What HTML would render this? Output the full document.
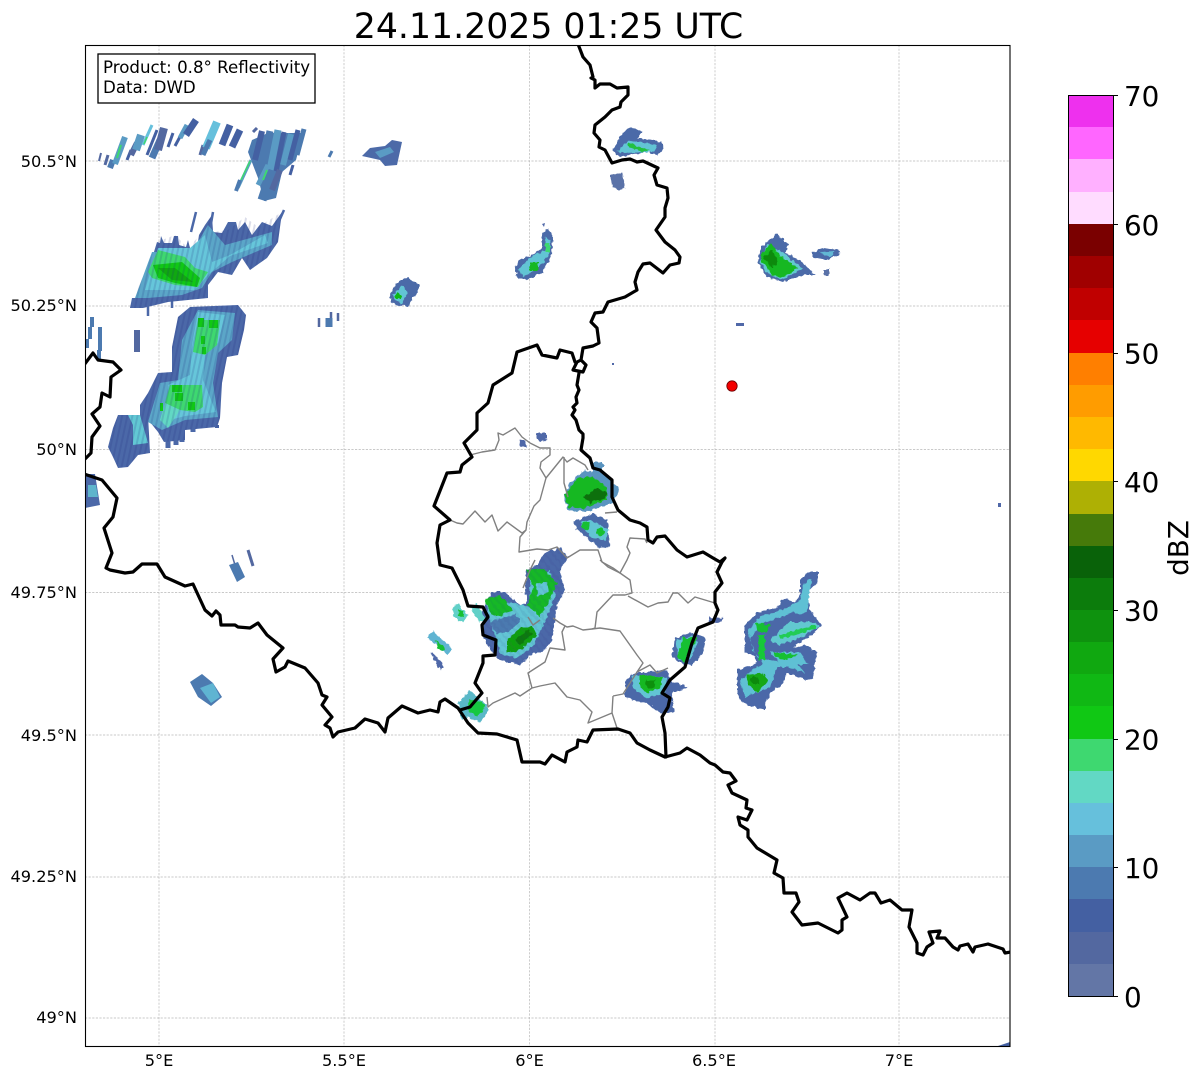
<!DOCTYPE html>
<html><head><meta charset="utf-8"><title>Radar</title>
<style>html,body{margin:0;padding:0;background:#fff}svg{display:block}text{font-family:"DejaVu Sans","Liberation Sans",sans-serif;fill:#000}</style></head>
<body>
<svg xmlns="http://www.w3.org/2000/svg" width="1202" height="1081" viewBox="0 0 1202 1081">
<defs>
<clipPath id="ax"><rect x="85" y="45" width="925" height="1001"/></clipPath>
<pattern id="st" width="5" height="40" patternUnits="userSpaceOnUse" patternTransform="rotate(12)"><rect width="2" height="40" fill="#202c80" fill-opacity=".16"/></pattern>
<pattern id="st2" width="6" height="40" patternUnits="userSpaceOnUse" patternTransform="rotate(-40)"><rect width="2.5" height="40" fill="#202c80" fill-opacity=".08"/></pattern>
<filter id="r" x="-10%" y="-10%" width="120%" height="120%"><feTurbulence type="fractalNoise" baseFrequency=".28" numOctaves="1" seed="4"/><feDisplacementMap in="SourceGraphic" scale="5" xChannelSelector="R" yChannelSelector="G"/></filter>
</defs>
<rect width="1202" height="1081" fill="#fff"/>
<text x="548.5" y="38" font-size="34.7" text-anchor="middle">24.11.2025 01:25 UTC</text>
<g clip-path="url(#ax)">
<!-- grid -->
<g stroke="#b8b8b8" stroke-width=".7" stroke-dasharray="2.2 1.4" fill="none">
<path d="M159 45V1046M344 45V1046M529.5 45V1046M715 45V1046M899 45V1046"/>
<path d="M85 161H1010M85 306H1010M85 449.5H1010M85 592.5H1010M85 735H1010M85 877H1010M85 1018H1010"/>
</g>
<!-- NW strip bars -->
<polygon points="252,140 268,133 303,133 296,160 282,172 276,198 264,201 258,178 248,152" fill="#4c7ab0"/>
<g fill="none" stroke-linecap="butt">
<path d="M99 161L101 153" stroke="#5368a0" stroke-width="2"/>
<path d="M105 165L108 155" stroke="#5368a0" stroke-width="3"/>
<path d="M110 168L113 160" stroke="#4c7ab0" stroke-width="6"/>
<path d="M115 164L125 137" stroke="#5a9bc4" stroke-width="6"/>
<path d="M117 158L121 145" stroke="#3ed870" stroke-width="2"/>
<path d="M127 160L131 150" stroke="#4460a2" stroke-width="3"/>
<path d="M131 155L137 143" stroke="#5368a0" stroke-width="6"/>
<path d="M136 150L141 135" stroke="#5a9bc4" stroke-width="8"/>
<path d="M143 145L152 125" stroke="#66c0dc" stroke-width="3"/>
<path d="M144 144L147 137" stroke="#3ed870" stroke-width="1.5"/>
<path d="M147 155L157 130" stroke="#4460a2" stroke-width="3"/>
<path d="M152 158L160 140" stroke="#4c7ab0" stroke-width="7"/>
<path d="M158 150L164 128" stroke="#5368a0" stroke-width="8"/>
<path d="M168 147L173 133" stroke="#4460a2" stroke-width="3"/>
<path d="M175 146L182 133" stroke="#4460a2" stroke-width="3"/>
<path d="M180 138L187 125" stroke="#5a9bc4" stroke-width="5"/>
<path d="M186 135L196 120" stroke="#4460a2" stroke-width="7"/>
<path d="M200 155L203 145" stroke="#5368a0" stroke-width="3"/>
<path d="M206 148L217 122" stroke="#66c0dc" stroke-width="8"/>
<path d="M203 155L210 140" stroke="#4c7ab0" stroke-width="5"/>
<path d="M222 145L230 125" stroke="#4460a2" stroke-width="7"/>
<path d="M232 147L240 130" stroke="#4460a2" stroke-width="7"/>
<path d="M238 188L251 160" stroke="#5a9bc4" stroke-width="3"/>
<path d="M241 180L250 161" stroke="#3ed870" stroke-width="1.5"/>
<path d="M236 191L240 180" stroke="#4c7ab0" stroke-width="4"/>
<path d="M253 132L257 128" stroke="#5368a0" stroke-width="3"/>
<path d="M255 160L262 131" stroke="#4460a2" stroke-width="6"/>
<path d="M262 168L270 131" stroke="#4c7ab0" stroke-width="7"/>
<path d="M270 170L278 130" stroke="#5a9bc4" stroke-width="7"/>
<path d="M276 172L284 132" stroke="#4460a2" stroke-width="5"/>
<path d="M283 165L291 134" stroke="#5a9bc4" stroke-width="6"/>
<path d="M290 160L298 130" stroke="#4460a2" stroke-width="5"/>
<path d="M297 155L304 129" stroke="#4c7ab0" stroke-width="5"/>
<path d="M290 175L293 165" stroke="#4460a2" stroke-width="3"/>
<path d="M262 200L272 170" stroke="#4c7ab0" stroke-width="9"/>
<path d="M258 185L268 165" stroke="#5a9bc4" stroke-width="5"/>
<path d="M272 190L280 170" stroke="#5368a0" stroke-width="6"/>
<path d="M263 180L267 170" stroke="#3ed870" stroke-width="2"/>
<path d="M329 157L332 151" stroke="#4c7ab0" stroke-width="3"/>
<path d="M319 318V327M338 313V321M331 312V320" stroke="#5368a0" stroke-width="2.5"/>
<path d="M329 318V327" stroke="#4c7ab0" stroke-width="7"/>
<path d="M90 327V339M100 327V351M87 339V348M92 317V327M99 350V360" stroke="#4c7ab0" stroke-width="4"/>
<path d="M137 330V352" stroke="#5368a0" stroke-width="6"/>
<path d="M217 425V428" stroke="#4460a2" stroke-width="4"/>
<path d="M232 555L235 565" stroke="#5368a0" stroke-width="1.5"/>
<path d="M248 550L253 566" stroke="#5368a0" stroke-width="3"/>
<path d="M172 308V300M148 316V305M191 232L196 212M276 228L284 210M209 235L213 212" stroke="#4b68a8" stroke-width="2.5"/>
<path d="M168 448V434M176 445V432M182 442V430M193 432V425" stroke="#4b68a8" stroke-width="5"/>
</g>
<polygon points="362,156 370,148 385,146 392,140 402,142 397,165 385,166 380,160" fill="#4c6aa8"/>
<polygon points="375,152 390,147 394,152 380,158" fill="#5a9bc4"/>
<!-- storm 2 -->
<polygon points="130,308 132,298 140,298 157,242 160,243 161,236 164,243 172,243 174,236 178,236 179,245 186,247 188,240 190,248 197,248 199,235 205,225 212,215 213,232 222,233 228,222 236,222 238,230 245,222 252,235 262,222 272,226 282,212 278,242 267,258 250,270 242,258 232,275 218,272 208,285 208,298 168,302 143,308" fill="#4b68a8"/>
<polygon points="135,298 152,252 192,252 208,225 225,245 272,232 272,245 232,262 212,272 202,288 182,295 148,298" fill="#5ba6c8"/>
<polygon points="145,290 158,248 190,248 205,235 212,262 230,255 265,235 268,243 230,256 208,275 195,290" fill="#66c6da"/>
<polygon points="148,272 158,250 185,257 195,268 208,272 198,287 175,285 152,278" fill="#3ed870"/>
<polygon points="153,265 182,262 200,278 197,287 175,283 158,278" fill="#10c814"/>
<polygon points="158,268 175,268 193,282 172,280" fill="#10a810"/>
<polygon points="130,308 157,242 175,235 188,248 200,235 212,215 213,232 228,230 245,217 258,227 282,212 278,242 267,258 250,270 242,258 232,275 218,272 208,285 208,298 168,302 143,308" fill="url(#st)"/>
<!-- storm 3 -->
<polygon points="190,307 238,305 246,315 244,330 238,355 227,357 222,383 220,418 217,427 185,430 185,440 164,442 158,432 150,422 140,422 140,405 148,393 158,373 172,372 172,347 178,317" fill="#4b68a8"/>
<polygon points="198,310 235,313 232,340 218,353 213,383 218,417 185,420 162,430 148,422 160,383 178,380 182,340" fill="#5ba6c8"/>
<polygon points="198,312 225,315 218,343 205,355 203,380 216,412 185,416 170,420 168,385 190,375 192,345" fill="#66c6da"/>
<polygon points="198,320 220,320 217,345 205,355 193,352" fill="#3ed870"/>
<polygon points="170,385 202,385 203,407 195,412 180,410 165,403" fill="#3ed870"/>
<polygon points="165,403 180,410 168,428 160,420" fill="#62d8c4"/>
<g fill="#10c814"><rect x="198" y="318" width="6" height="9"/><rect x="209" y="320" width="9" height="8"/><rect x="201" y="336" width="4" height="8"/><rect x="202" y="347" width="4" height="7"/><rect x="172" y="385" width="10" height="7"/><rect x="175" y="393" width="8" height="8"/><rect x="188" y="402" width="7" height="8"/><rect x="160" y="403" width="3" height="8"/></g>
<polygon points="190,307 238,305 246,315 244,330 238,355 227,357 222,383 220,418 217,427 185,430 185,440 164,442 158,432 150,422 140,422 140,405 148,393 158,373 172,372 172,347 178,317" fill="url(#st)"/>
<!-- left -->
<polygon points="118,415 148,415 150,453 138,455 128,467 118,468 113,457 108,447 113,428" fill="#4b68a8"/>
<polygon points="128,415 140,415 148,443 133,445 133,425" fill="#62c8d4"/>
<polygon points="118,415 148,415 150,453 138,455 128,467 118,468 113,457 108,447 113,428" fill="url(#st)"/>
<polygon points="85,474 95,474 100,505 85,508" fill="#4b68a8"/>
<polygon points="88,485 96,485 98,497 88,497" fill="#5fb4cc"/>
<polygon points="229,565 238,562 245,577 237,582" fill="#4c7ab0"/>
<polygon points="190,682 202,674 213,683 222,697 211,706 198,697" fill="#4c7ab0"/>
<polygon points="200,688 213,683 220,697 211,703" fill="#5fb4d2"/>
<!-- rough echoes -->
<g filter="url(#r)">
<polygon points="390,295 397,282 407,278 420,285 418,292 407,307 392,303" fill="#4c6aa8"/>
<polygon points="393,295 402,286 408,292 402,304 394,300" fill="#62c4d4"/>
<circle cx="398" cy="296" r="3" fill="#10b814"/>
<polygon points="515,268 520,260 533,255 542,248 542,235 548,228 553,238 552,255 543,272 527,280 518,278" fill="#4c6aa8"/>
<polygon points="518,270 530,258 545,250 546,236 551,242 549,255 538,268 524,277" fill="#62c4d4"/>
<rect x="545" y="243" width="5" height="9" fill="#3ed870"/><rect x="530" y="263" width="8" height="8" fill="#12b820"/>
<polygon points="612,150 623,133 630,127 643,132 637,138 662,142 663,148 658,155 647,152 620,157" fill="#4c6aa8"/>
<polygon points="617,152 628,140 657,145 653,152 620,153" fill="#62c4d4"/>
<polygon points="628,143 650,150 643,152 628,147" fill="#20c040"/>
<polygon points="610,175 622,172 625,188 618,191 612,185" fill="#5a72a8"/>
<polygon points="757,262 762,247 777,233 788,245 785,253 800,260 815,275 805,275 783,282 767,277" fill="#4c6aa8"/>
<polygon points="760,262 767,245 782,252 802,268 783,280 767,273" fill="#62c8d0"/>
<polygon points="760,258 770,243 783,258 798,268 783,277 772,275" fill="#12b820"/>
<polygon points="763,257 772,250 778,262 772,268" fill="#0b8a10"/>
<polygon points="813,252 822,248 840,250 838,255 827,260 813,257" fill="#4c6aa8"/>
<polygon points="820,252 835,251 832,256 824,256" fill="#62b8d4"/>
<polygon points="824,270 829,270 829,275 824,275" fill="#5a72a8"/>
<polygon points="564,497 570,483 583,470 593,473 593,462 603,462 603,473 620,490 613,503 587,512 568,510" fill="#5a94c0"/>
<polygon points="565,495 577,478 593,477 607,487 607,500 583,508 568,507" fill="#12b820"/>
<polygon points="583,497 597,488 607,493 605,498 590,503" fill="#0a7010"/>
<polygon points="573,522 593,513 607,520 610,547 600,548 577,530" fill="#4c6aa8"/>
<polygon points="580,522 590,520 610,530 605,540 590,537" fill="#62c4d4"/>
<circle cx="586" cy="526" r="4" fill="#14c030"/><circle cx="600" cy="532" r="4" fill="#14c030"/>
<polygon points="537,433 547,433 547,438 542,442 537,440" fill="#5068a8"/>
<polygon points="519,440 526,442 527,447 520,448" fill="#5068a8"/>
<polygon points="482,612 492,592 505,592 520,605 527,603 525,590 527,570 538,565 543,553 560,548 568,557 560,570 565,590 557,605 555,620 552,640 545,650 530,655 520,665 500,660 490,650 483,635" fill="#4b68a8"/>
<polygon points="485,602 513,603 530,607 530,580 550,570 555,597 547,617 533,647 517,658 500,653" fill="#62c4d4"/>
<polygon points="490,622 516,614 520,622 508,632 497,634" fill="#4c7ab0"/>
<polygon points="527,570 543,568 557,583 548,603 540,617 528,605 533,587" fill="#14b828"/>
<polygon points="536,584 546,582 548,592 538,596" fill="#62c4d4"/>
<polygon points="484,600 500,595 513,610 500,615 492,615" fill="#14b828"/>
<polygon points="507,640 520,627 533,627 537,635 520,650 507,653" fill="#10a010"/>
<polygon points="515,640 528,630 532,635 520,645" fill="#0a7a10"/>
<polygon points="482,612 492,592 505,592 520,605 527,603 525,590 527,570 538,565 543,553 560,548 568,557 560,570 565,590 557,605 555,620 552,640 545,650 530,655 520,665 500,660 490,650 483,635" fill="url(#st2)"/>
<polygon points="452,608 458,603 468,615 463,623 455,618" fill="#62d0c8"/>
<polygon points="470,608 477,603 485,618 480,623" fill="#62d0c8"/>
<polygon points="458,610 463,610 464,617 459,616" fill="#14c030"/>
<polygon points="427,637 433,632 452,648 447,655" fill="#5fb4d2"/>
<polygon points="435,640 443,645 445,652 438,648" fill="#14c030"/>
<polygon points="430,652 433,653 445,667 440,670" fill="#5068a8"/>
<polygon points="458,703 470,690 488,707 488,713 480,722 468,717 462,720" fill="#5ab8c8"/>
<polygon points="470,700 482,702 485,708 477,717 467,708" fill="#18c840"/>
<polygon points="675,638 693,632 705,638 703,653 692,665 677,662 672,655" fill="#4c6aa8"/>
<polygon points="677,640 692,636 698,642 690,660 678,660" fill="#62c4d4"/>
<polygon points="683,638 698,638 690,650 685,662 677,657" fill="#14c030"/>
<polygon points="708,617 723,618 722,622 710,623" fill="#5068a8"/>
<polygon points="625,682 633,673 667,670 672,682 688,687 673,692 672,700 675,712 660,713 647,703 625,698" fill="#4b68a8"/>
<polygon points="632,675 667,677 665,692 647,698 633,688" fill="#62c4d4"/>
<polygon points="640,675 663,677 660,688 647,693 640,687" fill="#12b820"/>
<polygon points="645,680 655,680 654,688 647,688" fill="#0b9010"/>
<polygon points="800,580 808,572 818,572 818,582 807,593 810,610 822,625 815,632 807,638 793,648 805,645 817,652 813,678 807,680 787,673 783,683 770,693 765,705 765,710 748,705 743,703 737,693 737,670 757,663 755,657 745,652 745,625 757,612 777,608 783,598 795,602 800,593" fill="#4b68a8"/>
<polygon points="803,585 812,578 809,595 808,610 800,615 793,612 760,625 750,640 757,657 783,663 797,663 805,673 788,667 777,667 770,687 745,697 740,680 757,667 763,663 753,650 748,630 760,617 787,608 800,600" fill="#5fc0d4"/>
<polygon points="770,640 790,622 815,622 819,627 795,640 778,645" fill="#62c8d0"/>
<polygon points="770,652 800,652 808,664 780,664" fill="#5fc0d4"/>
<polygon points="755,623 770,625 767,632 758,632" fill="#14c030"/>
<rect x="758" y="635" width="7" height="25" fill="#18c838"/>
<polygon points="773,652 798,655 787,660 775,657" fill="#14c030"/>
<path d="M815 627L780 637" stroke="#22cc55" stroke-width="4" fill="none"/>
<polygon points="747,675 763,673 768,682 757,692 748,685" fill="#12a818"/>
<polygon points="750,677 758,677 760,684 752,684" fill="#0b8a10"/>
</g>
<rect x="736" y="323" width="8" height="3" fill="#5068a8"/>
<rect x="998" y="503" width="3" height="4" fill="#5068a8"/>
<rect x="612" y="363" width="2" height="2" fill="#5068a8"/>
<polygon points="998,1046 1010,1042 1010,1046" fill="#4460a2"/>
<polygon points="542,224 545,223 544,227" fill="#5068a8"/>
<!-- gray lines -->
<g fill="none" stroke="#808080" stroke-width="1.4" stroke-linejoin="round">
<path d="M470 455L482 452 495 450 499 440 498 433 503 435 515 428 522 437 530 443 540 448 550 448 550 455 541 462 540 468 546 478 540 500 534 506 527 522 526 530 520 537 519 552 537 549 548 550 557 547 567 558 580 550 598 550 602 562 613 568 620 573 627 560 630 553 627 547 630 538 645 539 647 543"/>
<path d="M450 520L457 523 463 524 475 511 485 522 492 515 498 531 507 522 522 533 526 530"/>
<path d="M546 478L563 457 567 462 573 458 585 465 588 470M564 457L564 483 568 497M605 513L617 512"/>
<path d="M620 573L630 580 632 593 625 595 613 595 597 612 595 628 592 629 583 630 573 626 567 627 560 623 553 618"/>
<path d="M600 560L608 567 620 573M628 596L648 607 658 603 668 602 673 593 678 593 688 603 695 597 715 603"/>
<path d="M592 629L600 628 620 631 637 655 643 663 637 672 650 665 657 673 668 668"/>
<path d="M613 696L623 694 637 672M613 696L612 713 588 723 592 712 580 700 567 697 555 683 540 686 532 688 520 696 515 693 493 703 488 707 487 697"/>
<path d="M532 688L528 673 545 662 550 648 565 650 562 632 565 626M612 713L617 728"/>
<path d="M523 588L530 570 535 560M528 617L533 625 540 620"/>
</g>
<!-- thick borders -->
<g fill="none" stroke="#000" stroke-width="3.2" stroke-linejoin="round" stroke-linecap="round">
<path d="M578 44L583 57 590 65 593 77 591 78 595 80 595 88 600 84 610 84 617 88 628 87 628 95 621 102 620 107 612 110 605 117 595 125 594 133 600 140 599 147 605 150 612 163 622 160 630 159 637 162 643 161 658 168 654 175 657 185 667 188 668 198 665 208 665 217 656 230 665 242 675 250 680 257 679 263 670 265 663 273 650 263 643 264 638 272 635 282 637 290 625 297 608 302 603 312 595 313 591 322 597 328 599 343 593 346 583 348 581 360 586 365 583 372 573 370 577 362 581 360M579 373L577 385 579 390 576 397 577 403 573 407 575 410 572 415 576 420 579 430 583 434 583 438 581 450 590 458 593 468 600 470 612 480 612 497 618 510 630 520 640 523 647 527 648 540 653 543 657 537 665 536 677 550 687 557 703 552 713 558 720 562 725 558 722 562 717 572 722 583 715 592 715 603 718 610 713 622 698 628 692 643 685 667 670 680 662 693 670 698 668 707 662 717 665 733 666 757"/>
<path d="M665 757L680 753 687 748 700 755 710 763 715 765 723 772 730 773 736 781 728 785 732 793 747 800 746 808 752 810 747 820 738 817 740 825 748 830 748 837 757 848 777 860 774 873 783 878 784 893 796 893 799 902 792 912 802 925 818 923 838 933 842 930 842 920 847 917 838 898 847 893 860 900 870 893 875 893 881 903 890 900 902 910 912 910 909 927 917 943 917 953 923 955 927 947 933 943 929 932 940 931 937 938 945 938 953 947 958 950 960 946 968 944 973 952 975 947 988 944 1003 949 1005 953 1011 952"/>
<path d="M84 365L93 353 98 360 113 362 121 370 111 377 110 397 102 393 100 407 92 414 100 426 92 437 91 453 84 460"/>
<path d="M84 474L102 480 117 498 113 517 104 528 112 553 106 568 110 570 125 573 133 572 142 564 157 564 165 577 185 586 193 584 205 610 212 616 216 611 220 615 221 625 235 625 238 627 250 628 258 623 267 635 283 648 273 659 276 672 285 667 288 661 305 668 318 683 322 695 327 697 322 705 332 717 325 725 330 728 333 737 338 732 355 728 365 719 378 723 385 732 388 718 402 706 418 713 430 710 438 712 440 702 445 699 458 708 468 723 478 733 497 734 517 740 522 762 540 762 545 764 552 755 565 762 567 752 577 747 578 740 587 742 593 730 618 729 630 733 637 743 650 750 665 757"/>
<path d="M460 710L470 707 482 693 475 683 483 663 483 656 495 655 496 640 483 635 482 625 488 617 483 607 468 606 463 590 452 568 440 565 437 543 440 525 450 520 434 506 447 473 460 472 462 465 472 457 464 443 477 430 477 413 488 403 493 385 512 373 517 352 537 345 542 355 557 358 560 350 572 353 575 362"/>
</g>
<circle cx="732" cy="386" r="5.2" fill="#f40000" stroke="#6a0000" stroke-width=".8"/>
</g>
<rect x="85.5" y="45.5" width="924.5" height="1001" fill="none" stroke="#000" stroke-width="1.1"/>
<!-- info box -->
<rect x="98" y="54" width="217" height="49" fill="#fff" stroke="#000" stroke-width="1.3"/>
<text x="103" y="73" font-size="16.65">Product: 0.8° Reflectivity</text>
<text x="103" y="93" font-size="16.65">Data: DWD</text>
<!-- tick labels -->
<g font-size="16.2" text-anchor="end">
<text x="77" y="167">50.5°N</text>
<text x="77" y="311">50.25°N</text>
<text x="77" y="455">50°N</text>
<text x="77" y="598">49.75°N</text>
<text x="77" y="741">49.5°N</text>
<text x="77" y="882">49.25°N</text>
<text x="77" y="1023">49°N</text>
</g>
<g font-size="16.2" text-anchor="middle">
<text x="159" y="1066">5°E</text>
<text x="344" y="1066">5.5°E</text>
<text x="529.5" y="1066">6°E</text>
<text x="714" y="1066">6.5°E</text>
<text x="899" y="1066">7°E</text>
</g>
<!-- colorbar -->
<g shape-rendering="crispEdges">
<rect x="1068" y="95" width="45" height="32.2" fill="#ee30ee"/>
<rect x="1068" y="127" width="45" height="32.2" fill="#ff66ff"/>
<rect x="1068" y="159" width="45" height="33.2" fill="#ffb0ff"/>
<rect x="1068" y="192" width="45" height="32.2" fill="#ffdcff"/>
<rect x="1068" y="224" width="45" height="32.2" fill="#7a0000"/>
<rect x="1068" y="256" width="45" height="32.2" fill="#a00000"/>
<rect x="1068" y="288" width="45" height="32.2" fill="#c00000"/>
<rect x="1068" y="320" width="45" height="33.2" fill="#e60000"/>
<rect x="1068" y="353" width="45" height="32.2" fill="#ff7f00"/>
<rect x="1068" y="385" width="45" height="32.2" fill="#ff9c00"/>
<rect x="1068" y="417" width="45" height="32.2" fill="#ffb900"/>
<rect x="1068" y="449" width="45" height="32.2" fill="#ffd800"/>
<rect x="1068" y="481" width="45" height="33.2" fill="#aeb004"/>
<rect x="1068" y="514" width="45" height="32.2" fill="#467a0a"/>
<rect x="1068" y="546" width="45" height="32.2" fill="#096209"/>
<rect x="1068" y="578" width="45" height="32.2" fill="#0c7c0c"/>
<rect x="1068" y="610" width="45" height="32.2" fill="#0e920e"/>
<rect x="1068" y="642" width="45" height="32.2" fill="#10a810"/>
<rect x="1068" y="674" width="45" height="32.2" fill="#10b814"/>
<rect x="1068" y="706" width="45" height="33" fill="#10c814"/>
<rect x="1068" y="739" width="45" height="32.2" fill="#3ed870"/>
<rect x="1068" y="771" width="45" height="32.2" fill="#62d8c4"/>
<rect x="1068" y="803" width="45" height="32.2" fill="#66c0dc"/>
<rect x="1068" y="835" width="45" height="32.2" fill="#5a9bc4"/>
<rect x="1068" y="867" width="45" height="32.2" fill="#4c7ab0"/>
<rect x="1068" y="899" width="45" height="33.2" fill="#4460a2"/>
<rect x="1068" y="932" width="45" height="32.2" fill="#5368a0"/>
<rect x="1068" y="964" width="45" height="32.2" fill="#6376a6"/>
<rect x="1068.5" y="95.5" width="45" height="901" fill="none" stroke="#000" stroke-width="1"/>
<path d="M1113 95.5h5M1113 224.5h5M1113 353.5h5M1113 481.5h5M1113 610.5h5M1113 739.5h5M1113 867.5h5M1113 996.5h5" stroke="#000" stroke-width="1"/>
</g>
<g font-size="27.8">
<text x="1124" y="106">70</text>
<text x="1124" y="235">60</text>
<text x="1124" y="363.5">50</text>
<text x="1124" y="492">40</text>
<text x="1124" y="620.5">30</text>
<text x="1124" y="749.5">20</text>
<text x="1124" y="878">10</text>
<text x="1124" y="1007">0</text>
</g>
<text transform="translate(1188 548) rotate(-90)" font-size="27.8" text-anchor="middle">dBZ</text>
</svg>
</body></html>
